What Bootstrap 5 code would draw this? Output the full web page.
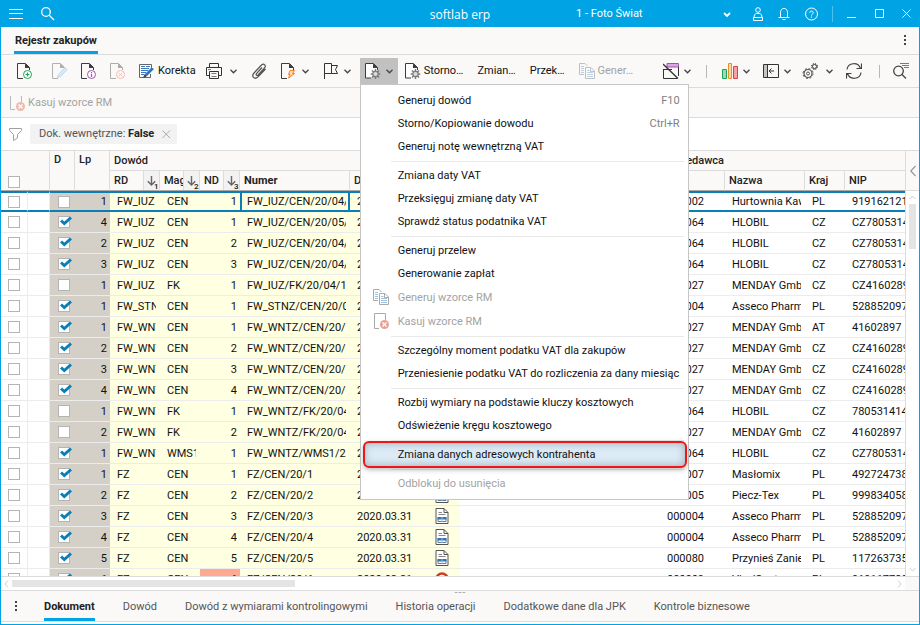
<!DOCTYPE html>
<html lang="pl">
<head>
<meta charset="utf-8">
<meta name="viewport" content="width=device-width, initial-scale=1">
<title>softlab erp</title>
<link href="https://cdn.jsdelivr.net/npm/bootstrap@5.3.0/dist/css/bootstrap.min.css" rel="stylesheet">
<style>
:root { --blue:#00a4e4; --deep:#0a7fb5; --panel:#faf9f8; --line:#dcdcdc; }
body { font:11px/16px Roboto, "Liberation Sans", sans-serif; color:#111; }
svg { display:block; flex:none; }
button { font:inherit; color:inherit; }
.app { border:1px solid var(--blue); border-top:0; }
.titlebar { background:var(--blue); height:27px; }
.icon-btn, .tool { background:none; border:0; padding:0; display:flex; align-items:center; }
.tool { height:26px; white-space:nowrap; }
.brand { font:12px/16px "Open Sans", sans-serif; left:50%; transform:translateX(-50%); top:7px; }
.firm-wrap { margin-right:22px; }
.firm { background:none; color:#fff; border:0; appearance:none; font:inherit; width:155px; outline:0; padding:0; }
.firm-wrap svg { right:0; top:6px; pointer-events:none; }
.title-sep { width:1px; height:16px; background:#4dc0ec; margin:0 14px; }
.doc-tabs { background:var(--panel); height:28px; border-bottom:1px solid var(--line); padding:0 12px 0 13px; }
.doc-tabs a { border-bottom:3px solid var(--blue); font-weight:700; color:#222; padding:0 1px; line-height:20px; }
.bar { background:var(--panel); border-bottom:1px solid var(--line); }
.bar-main { height:33px; padding:0 10px 0 16px; }
.bar-second { height:30px; }
.off { color:#a3a3a3; }
.gap-3px { gap:3px; } .gap-5px { gap:5px; } .gap-8px { gap:8px; } .gap-13 { gap:13px; } .gap-14 { gap:14px; } .gap-15 { gap:15px; } .gap-18 { gap:18px; }
.pull-2 { margin-left:-2px; } .pull-4 { margin-left:-4px; } .pull-5 { margin-left:-5px; } .pull-7 { margin-left:-7px; }
.push-6 { margin-right:6px; }
.bar-sep { width:1px; height:13px; background:#b8b8b8; }
.mid-sep { margin:0 2px; }
.opened { background:#c1c1c1; padding:0 5px; width:38px; }
.bar .menu-list { display:block; position:absolute; top:100%; left:0; z-index:20; width:329px; margin:0; padding:4px 0; border:1px solid #c6c6c6; border-radius:0; background:#fff; font-size:11px; }
.menu-list .dropdown-item { display:flex; align-items:center; height:23px; padding:0 8px 0 12px; line-height:23px; color:#111; }
.menu-list .with-icon { height:24px; }
.menu-list .dropdown-item:disabled { color:#a3a3a3; }
.menu-list .slot { width:25px; flex:none; }
.menu-list kbd { margin-left:auto; background:none; color:#808080; font:inherit; padding:0; }
.menu-list hr { margin:3px 4px 2px 30px; border:0; border-top:1px solid #e9e9e9; opacity:1; }
.menu-list .picked { position:relative; background:#dcebf5; box-shadow:inset 0 0 8px #94a8b8; margin:0 3px; width:calc(100% - 6px); padding-left:9px; }
.menu-list .picked::after { content:""; position:absolute; inset:-2px -2px -2px -1px; border:2px solid #f01616; border-radius:6px; box-shadow:0 2px 5px rgba(0,0,0,.25); }
.filterbar { height:33px; border-bottom:1px solid var(--line); }
.chip { background:#f2f2f2; border-radius:2px; height:20px; color:#555; padding:0 6px 0 9px; }
.chip b { color:#222; }
.grid-scroll { overflow:hidden; }
.ledger { table-layout:fixed; width:100%; border-collapse:separate; border-spacing:0; }
.ledger th { background:var(--panel); font-weight:500; color:#222; padding:0 0 0 4px; border-right:1px solid var(--line); overflow:hidden; white-space:nowrap; vertical-align:middle; }
.ledger .groups th { height:20px; border-bottom:1px solid var(--line); }
.ledger .heads th { height:20px; border-bottom:1px solid #a8a8a8; }
.ledger .groups th[rowspan] { border-bottom-color:#a8a8a8; vertical-align:top; padding-top:1px; }
.ledger .groups th.pick-all { vertical-align:bottom; padding:0 0 2px 7px; }
.ledger .none { border-right:0; }
.head-cell { height:19px; line-height:19px; }
.sorter { width:16px; border-left:1px solid var(--line); background:#f3f2f2; align-self:stretch; }
.ledger td { height:21px; padding:0 4px 0 7px; border-bottom:1px solid #ececec; white-space:nowrap; overflow:hidden; }
.ledger td > span { display:block; overflow:hidden; height:20px; line-height:21px; }
.ledger .edge { border-right:1px solid #ececec; }
.ledger .gray { background:#d4d0c8; }
.ledger .yel { background:#ffffe1; }
.ledger .salmon { background:#ffa992; }
.ledger .num { text-align:right; padding-right:3px; }
.ledger .current td { border-top:2px solid var(--deep); border-bottom:2px solid var(--deep); }
.ledger .current td > span { height:17px; line-height:17px; }
.ledger .current .focus { border-left:2px solid var(--deep); border-right:2px solid var(--deep); padding-left:5px; padding-right:2px; }
.ledger td.tick { padding:0 0 0 7px; }
.ledger td.tick.gray { padding-left:8px; }
.ledger td.flag { padding:4px 0 0 9px; }
.tickbox { appearance:none; display:block; width:12px; height:12px; margin:0; border:1px solid #b4b4b4; background:#fff; }
.tick label { display:block; position:relative; width:12px; height:12px; }
.tick svg { position:absolute; left:2px; top:0; }
.rail { width:14px; }
.rail-top { height:40px; background:var(--panel); border-bottom:1px solid var(--line); border-left:1px solid var(--line); }
.rail-body { border-left:1px solid var(--line); }
.rail-thumb { width:7px; height:45px; background:#e4e4e4; }
.hrail { height:15px; border-top:1px solid var(--line); border-bottom:1px solid var(--line); padding-left:3px; gap:3px; }
.hrail-thumb { height:7px; width:283px; background:#e4e4e4; }
.corner { width:14px; background:var(--panel); }
.pages { background:var(--panel); height:31px; border-bottom:1px solid var(--line); margin-bottom:2px; padding-left:14px; gap:26px; }
.pages a { color:#555; line-height:22px; border-bottom:3px solid transparent; }
.pages .now { color:#222; font-weight:700; border-color:var(--blue); }
.pages .grip { left:50%; top:1px; transform:translateX(-50%); }
.page-links { gap:28px; }
</style>
<script src="https://cdn.jsdelivr.net/npm/bootstrap@5.3.0/dist/js/bootstrap.bundle.min.js"></script>
</head>
<body>
<svg width="0" height="0" class="position-absolute" aria-hidden="true">
  <defs>
    <symbol id="chev" viewBox="0 0 7 5"><path d="M.5.8 3.5 3.8 6.5.8" fill="none" stroke="#444" stroke-width="1.300"/></symbol>
    <symbol id="page" viewBox="0 0 16 16"><path d="M6 15.500H.5V.5H8.500L12.500 4.500V7" fill="none" stroke="#3c3c3c"/><path d="M8 .5V5H13Z" fill="#3c3c3c"/></symbol>
    <symbol id="cog" viewBox="0 0 10 10"><path d="M5 0V10M0 5H10M1.500 1.500 8.500 8.500M8.500 1.500 1.500 8.500" stroke="#7a7a7a" stroke-width="1.500"/><circle cx="5" cy="5" r="2.700" fill="#ddd" stroke="#7a7a7a" stroke-width="1.200"/></symbol>
    <symbol id="pagecog" viewBox="0 0 16 16"><path d="M6 15H.5V.5H8.500L12.500 4.500V7" fill="#fff" stroke="#3c3c3c"/><path d="M8 .5V5H13Z" fill="#3c3c3c"/><use href="#cog" x="5.500" y="6" width="10" height="10"/></symbol>
    <symbol id="copies" viewBox="0 0 16 16"><g fill="none" stroke="#a9a9a9"><path d="M5 11.500H.5V.5H6L8.500 3"/><path d="M6.500 4.500H12L15.500 8V15.500H6.500Z" fill="#fff"/><path d="M11.500 4.500V8.500H15.500"/></g><path d="M2 3.500H5M2 5.500H5M2 7.500H5M2 9.500H5M8 7.500H10.500M8 9.500H14M8 11.500H14M8 13.500H14" stroke="#9fc0dc"/></symbol>
    <symbol id="pagedel" viewBox="0 0 16 16"><path d="M6 15.500H1.500V.5H12.500V7" fill="none" stroke="#a9a9a9"/><circle cx="11.500" cy="11.500" r="4.500" fill="#e9a196"/><path d="M9.500 9.500 13.500 13.500M13.500 9.500 9.500 13.500" stroke="#fff" stroke-width="1.300"/></symbol>
    <symbol id="sort" viewBox="0 0 9 10"><path d="M4.500 0V9M.8 5.200 4.500 9 8.200 5.200" fill="none" stroke="#666" stroke-width="1.400"/></symbol>
    <symbol id="check" viewBox="0 0 12 10"><path d="M1 4.500 4.300 7.500 11 1.500" fill="none" stroke="#0a7fb5" stroke-width="3"/></symbol>
    <symbol id="report" viewBox="0 0 13 16"><path d="M.5.5H8.500L12.500 4.500V15.500H.5Z" fill="#fff" stroke="#555"/><path d="M8.500.5V4.500H12.500" fill="none" stroke="#555"/><path d="M3 4.500H6.500M3 6.500H10" stroke="#888"/><path d="M2.500 9.500H10.500V13.500H2.500Z" fill="#fff" stroke="#5b7f9f"/><path d="M2 9H11V11.500H2Z" fill="#3575b5"/><path d="M6.500 9V14" stroke="#9bb8d2"/></symbol>
    <symbol id="stop" viewBox="0 0 14 14"><circle cx="7" cy="7" r="5.500" fill="#fff" stroke="#d23a22" stroke-width="2.500"/></symbol>
  </defs>
</svg>

<div class="app d-flex flex-column vh-100 overflow-hidden">
  <header class="titlebar d-flex align-items-center text-white position-relative flex-shrink-0">
    <div class="d-flex align-items-center gap-18 ps-2">
      <button class="icon-btn" aria-label="Menu"><svg width="14" height="10" stroke="#fff"><path d="M0 .5H14M0 4.500H14M0 9.500H14"/></svg></button>
      <button class="icon-btn" aria-label="Szukaj"><svg width="14" height="14" fill="none" stroke="#fff" stroke-width="1.300"><circle cx="5" cy="5" r="4.300"/><path d="M8 8 13 13"/></svg></button>
    </div>
    <div class="brand position-absolute">softlab erp</div>
    <div class="ms-auto d-flex align-items-center">
      <div class="firm-wrap position-relative">
        <select class="firm d-block" aria-label="Firma"><option>1 - Foto Świat</option></select>
        <svg class="position-absolute" width="8" height="6"><path d="M1 1 4 4 7 1" fill="none" stroke="#fff" stroke-width="1.800"/></svg>
      </div>
      <div class="d-flex align-items-center gap-15">
        <button class="icon-btn" aria-label="Użytkownik"><svg width="10" height="14" fill="none" stroke="#fff"><circle cx="5" cy="3" r="2.300"/><path d="M1 11C1 8 2 6.500 3.500 6.500H6.500C8 6.500 9 8 9 11M.5 10.500H9.500V13.500H.5Z"/></svg></button>
        <button class="icon-btn" aria-label="Powiadomienia"><svg width="12" height="14" fill="none" stroke="#fff"><path d="M2.500 10.500V5.500C2.500 0 9.500 0 9.500 5.500V10.500M.5 10.500H11.500M4.500 12.500H7.500"/></svg></button>
        <button class="icon-btn" aria-label="Pomoc"><svg width="13" height="14" fill="none" stroke="#fff"><circle cx="6.500" cy="7" r="6"/><path d="M4.700 5.800C4.700 3.500 8.300 3.500 8.300 5.800 8.300 7 6.500 7 6.500 8.500M6.500 9.500V10.700"/></svg></button>
      </div>
      <span class="title-sep"></span>
      <div class="d-flex align-items-center gap-18 pe-2">
        <button class="icon-btn" aria-label="Minimalizuj"><svg width="9" height="10"><path d="M0 8.500H9" stroke="#fff"/></svg></button>
        <button class="icon-btn" aria-label="Maksymalizuj"><svg width="10" height="10"><path d="M1.500.500H9.500V8.500H1.500Z" fill="none" stroke="#fff"/></svg></button>
        <button class="icon-btn" aria-label="Zamknij"><svg width="9" height="9"><path d="M.5.500 8.500 8.500M8.500.500.500 8.500" stroke="#fff"/></svg></button>
      </div>
    </div>
  </header>

  <nav class="doc-tabs d-flex align-items-center justify-content-between flex-shrink-0">
    <a href="#" class="text-decoration-none align-self-end">Rejestr zakupów</a>
    <button class="icon-btn" aria-label="Więcej"><svg width="3" height="11" fill="#444"><path d="M0 0H2V2H0ZM0 4H2V6H0ZM0 8H2V10H0Z"/></svg></button>
  </nav>

  <div class="bar bar-main d-flex align-items-center justify-content-between flex-shrink-0" role="toolbar" aria-label="Narzędzia">
    <div class="d-flex align-items-center gap-14">
      <div class="d-flex gap-13">
        <button class="tool push-6" aria-label="Nowy"><svg width="16" height="16"><use href="#page" width="16" height="16"/><circle cx="10.500" cy="11.500" r="4" fill="#fff" stroke="#21a35a"/><path d="M8.500 11.500H12.500M10.500 9.500V13.500" stroke="#21a35a" stroke-width="1.200"/></svg></button>
        <button class="tool" disabled aria-label="Edytuj"><svg width="16" height="16" opacity=".38"><use href="#page" width="16" height="16"/><path d="M5.500 14.500 6.500 11.500 13 4.500 15 6.500 8.500 13.500Z" fill="#a9d8f2" stroke="#4a9fd0"/></svg></button>
        <button class="tool" aria-label="Informacje"><svg width="16" height="16"><use href="#page" width="16" height="16"/><circle cx="10.500" cy="11.500" r="4" fill="#fff" stroke="#a352ae"/><path d="M10.500 9V10M10.500 10.800V14" stroke="#a352ae" stroke-width="1.200"/></svg></button>
        <button class="tool" disabled aria-label="Usuń"><svg width="16" height="16" opacity=".4"><use href="#page" width="16" height="16"/><circle cx="10.500" cy="11.500" r="4" fill="#fff" stroke="#f0604f"/><path d="M8.800 9.800 12.200 13.200M12.200 9.800 8.800 13.200" stroke="#f0604f"/></svg></button>
        <button class="tool gap-3px"><svg width="16" height="16"><path d="M12.500 5V1.500H.5V14.500H11.500V11" fill="none" stroke="#666"/><path d="M2 3.500H6M7 3.500H11M2 5.500H10M2 7.500H9M2 9.500H7M2 11.500H5" stroke="#3c78bb"/><path d="M4.500 14.500 5.500 11.500 12.500 4.500 15 6 8 13Z" fill="#2f73bd"/><path d="M4 15 5.500 11.500 7.500 13.500Z" fill="#444"/></svg>Korekta</button>
      </div>
      <button class="tool gap-8px pull-4" aria-label="Drukuj"><svg width="16" height="16" fill="none" stroke="#333"><path d="M3.500 5V.5H12.500V5M3.500 12.500H.5V4.500H15.500V12.500H12.500M3.500 8.500H12.500V15.500H3.500Z"/><path d="M5.500 10.500H10.500M5.500 13.500H10.500" stroke="#777"/><path d="M2 6.500H5" stroke="#2b8fd0"/></svg><svg width="7" height="5"><use href="#chev"/></svg></button>
      <button class="tool" aria-label="Załącznik"><svg width="16" height="16" fill="none" stroke="#555" stroke-width="1.200"><path d="M11 4.500 5.500 10.500C4.500 12 6 13 7.200 12L13.500 5C15.500 2.500 13 0 10.500 2L3 10C0 13.500 3.500 17 6.800 14L14.500 6"/></svg></button>
      <button class="tool gap-5px" aria-label="Szybkie akcje"><svg width="16" height="16"><use href="#page" width="16" height="16"/><path d="M9 7.500H13.500L11.500 10.500H13.500L7.500 15L9 11.500H7.500Z" fill="#fbdcb8" stroke="#ec8527"/></svg><svg width="7" height="5"><use href="#chev"/></svg></button>
      <button class="tool gap-5px" aria-label="Flaga"><svg width="16" height="16" fill="none" stroke="#333"><path d="M1.500 16V.500H8.500V10.500H1.500M8.500 2.500H14.500L12.500 6.500 14.500 10.500H8.500"/></svg><svg width="7" height="5"><use href="#chev"/></svg></button>
      <div class="position-relative pull-5">
        <button class="tool opened gap-5px" aria-expanded="true" aria-label="Operacje"><svg width="16" height="16"><use href="#pagecog"/></svg><svg width="7" height="5"><use href="#chev"/></svg></button>
        <div class="menu-list dropdown-menu show">
          <button class="dropdown-item"><span class="slot"></span>Generuj dowód<kbd>F10</kbd></button>
          <button class="dropdown-item"><span class="slot"></span>Storno/Kopiowanie dowodu<kbd>Ctrl+R</kbd></button>
          <button class="dropdown-item"><span class="slot"></span>Generuj notę wewnętrzną VAT</button>
          <hr>
          <button class="dropdown-item"><span class="slot"></span>Zmiana daty VAT</button>
          <button class="dropdown-item"><span class="slot"></span>Przeksięguj zmianę daty VAT</button>
          <button class="dropdown-item"><span class="slot"></span>Sprawdź status podatnika VAT</button>
          <hr>
          <button class="dropdown-item"><span class="slot"></span>Generuj przelew</button>
          <button class="dropdown-item"><span class="slot"></span>Generowanie zapłat</button>
          <button class="dropdown-item with-icon" disabled><span class="slot"><svg width="16" height="16"><use href="#copies"/></svg></span>Generuj wzorce RM</button>
          <button class="dropdown-item with-icon" disabled><span class="slot"><svg width="16" height="16"><use href="#pagedel"/></svg></span>Kasuj wzorce RM</button>
          <hr>
          <button class="dropdown-item"><span class="slot"></span>Szczególny moment podatku VAT dla zakupów</button>
          <button class="dropdown-item"><span class="slot"></span>Przeniesienie podatku VAT do rozliczenia za dany miesiąc</button>
          <hr>
          <button class="dropdown-item"><span class="slot"></span>Rozbij wymiary na podstawie kluczy kosztowych</button>
          <button class="dropdown-item"><span class="slot"></span>Odświeżenie kręgu kosztowego</button>
          <hr>
          <button class="dropdown-item picked"><span class="slot"></span>Zmiana danych adresowych kontrahenta</button>
          <hr>
          <button class="dropdown-item" disabled><span class="slot"></span>Odblokuj do usunięcia</button>
        </div>
      </div>
      <button class="tool gap-3px pull-7"><svg width="16" height="16"><use href="#pagecog"/></svg>Storno…</button>
      <button class="tool">Zmian…</button>
      <button class="tool">Przek…</button>
      <button class="tool gap-3px off" disabled><svg width="16" height="16" opacity=".7"><use href="#copies"/></svg>Gener…</button>
    </div>
    <div class="d-flex align-items-center gap-13">
      <button class="tool gap-5px" aria-label="Kalendarz"><svg width="16" height="16"><path d="M4 .500H15.500V4H4Z" fill="#d9a8de" stroke="#a352ae"/><path d="M0 6.500H9M.5 6V15.500H14M15.500 4V13" fill="none" stroke="#333"/><path d="M0 1 15 15.500" stroke="#333" stroke-width="1.300"/></svg><svg width="7" height="5"><use href="#chev"/></svg></button>
      <span class="bar-sep mid-sep"></span>
      <button class="tool gap-5px" aria-label="Wykres"><svg width="16" height="16"><path d="M.5 6.500H4.500V15.500H.5Z" fill="#9fd6b5" stroke="#21a35a"/><path d="M6.500.500H9.500V15.500H6.500Z" fill="#ffd9a0" stroke="#e8912c"/><path d="M11.500 3.500H15.500V15.500H11.500Z" fill="#f5a3a3" stroke="#e04040"/></svg><svg width="7" height="5"><use href="#chev"/></svg></button>
      <button class="tool gap-5px" aria-label="Panel"><svg width="16" height="16"><path d="M.5 1.500H15.500V14.500H.5Z" fill="none" stroke="#333"/><path d="M1 2H4V14H1Z" fill="#c4c4c4"/><path d="M4.500 2V14M6 8H11M8.500 5.500 6 8 8.500 10.500" fill="none" stroke="#333"/></svg><svg width="7" height="5"><use href="#chev"/></svg></button>
      <button class="tool gap-8px pull-2" aria-label="Ustawienia"><svg width="16" height="16" fill="none" stroke="#555"><circle cx="6" cy="10.500" r="4" stroke-width="1.200"/><circle cx="6" cy="10.500" r="5" stroke-dasharray="2 1.930"/><circle cx="6" cy="10.500" r="1.500"/><circle cx="12.500" cy="3.500" r="2" stroke="#333"/><circle cx="12.500" cy="3.500" r="3" stroke="#333" stroke-dasharray="1.300 1.060"/></svg><svg width="7" height="5"><use href="#chev"/></svg></button>
      <button class="tool" aria-label="Odśwież"><svg width="16" height="16" fill="none" stroke="#444" stroke-width="1.200"><path d="M1 6.500C2-.500 12-1.500 14.500 5.500M15.500.500V5.500H10.500M15 9.500C14 16.500 4 17.500 1.500 10.500M.5 15.500V10.500H5.500"/></svg></button>
      <span class="bar-sep ms-1"></span>
      <button class="tool" aria-label="Szukaj w tabeli"><svg width="16" height="16" fill="none"><circle cx="5.500" cy="8" r="4.800" stroke="#444" stroke-width="1.300"/><path d="M9 11.500 13 15.500" stroke="#444" stroke-width="1.300"/><path d="M7 .500H16M9 2.500H16M11 4.500H16" stroke="#2b8fd0"/></svg></button>
    </div>
  </div>

  <div class="bar bar-second d-flex align-items-center flex-shrink-0 ps-2">
    <button class="tool off gap-3px" disabled><svg width="16" height="16"><path d="M6 14.500H1.500V1M12.500 1V7" fill="none" stroke="#b9b9b9"/><circle cx="11.500" cy="11.500" r="4.500" fill="#edb9b0"/><path d="M9.500 9.500 13.500 13.500M13.500 9.500 9.500 13.500" stroke="#fff" stroke-width="1.300"/></svg>Kasuj wzorce RM</button>
  </div>

  <div class="filterbar d-flex align-items-center flex-shrink-0 ps-2 gap-8px">
    <svg width="13" height="13" fill="none" stroke="#a0a0a0"><path d="M.5.500H12.500V2.500L8.500 6.500V10L4.500 12.500V6.500L.500 2.500Z"/></svg>
    <div class="chip d-flex align-items-center">Dok. wewnętrzne:&nbsp;<b>False</b><button class="icon-btn ms-2" aria-label="Usuń filtr"><svg width="9" height="9"><path d="M.5.500 8 8M8 .500.500 8" stroke="#aaa"/></svg></button></div>
  </div>

  <main class="d-flex flex-grow-1 overflow-hidden">
    <div class="grid-scroll flex-grow-1">
      <table class="ledger">
        <colgroup>
          <col width="27"><col width="22"><col width="25"><col width="35"><col width="50"><col width="40"><col width="40"><col width="110"><col width="70"><col width="40"><col><col width="65"><col width="80"><col width="40"><col width="60">
        </colgroup>
        <thead>
          <tr class="groups">
            <th rowspan="2" class="none pick-all"><input type="checkbox" class="tickbox" aria-label="Zaznacz wszystkie"></th>
            <th rowspan="2"></th><th rowspan="2">D</th><th rowspan="2">Lp</th>
            <th colspan="6">Dowód</th><th></th><th colspan="4" class="none">Sprzedawca</th>
          </tr>
          <tr class="heads">
            <th><div class="head-cell d-flex">RD<span class="sorter ms-auto"><svg width="16" height="19"><use href="#sort" x="3" y="5" width="9" height="10"/><text x="10" y="18" font-size="8" fill="#111">1</text></svg></span></div></th>
            <th><div class="head-cell d-flex"><span class="overflow-hidden">Mag.</span><span class="sorter ms-auto flex-shrink-0"><svg width="16" height="19"><use href="#sort" x="3" y="5" width="9" height="10"/><text x="10" y="18" font-size="8" fill="#111">2</text></svg></span></div></th>
            <th><div class="head-cell d-flex">ND<span class="sorter ms-auto"><svg width="16" height="19"><use href="#sort" x="3" y="5" width="9" height="10"/><text x="10" y="18" font-size="8" fill="#111">3</text></svg></span></div></th>
            <th class="fw-bold">Numer</th><th>Data</th><th></th><th></th><th>Kod</th><th>Nazwa</th><th>Kraj</th><th class="none">NIP</th>
          </tr>
        </thead>
        <tbody id="rows"></tbody>
      </table>
    </div>
    <div class="rail d-flex flex-column flex-shrink-0">
      <button class="icon-btn rail-top justify-content-center" aria-label="Rozwiń panel"><svg width="6" height="12"><path d="M5.500 1 .800 6 5.500 11" fill="none" stroke="#999" stroke-width="1.200"/></svg></button>
      <div class="rail-body flex-grow-1 d-flex flex-column align-items-center">
        <svg width="7" height="5" class="my-1"><path d="M.5 4 3.500 1 6.500 4" fill="none" stroke="#ccc"/></svg>
        <div class="rail-thumb"></div>
        <svg width="7" height="5" class="mt-auto mb-1"><path d="M.5 1 3.500 4 6.500 1" fill="none" stroke="#ccc"/></svg>
      </div>
    </div>
  </main>
  <div class="hrail d-flex align-items-center flex-shrink-0">
    <svg width="5" height="8"><path d="M4 .500 1 4 4 7.500" fill="none" stroke="#ccc"/></svg>
    <div class="hrail-thumb"></div>
    <svg width="5" height="8" class="ms-auto"><path d="M1 .500 4 4 1 7.500" fill="none" stroke="#ccc"/></svg>
    <div class="corner align-self-stretch"></div>
  </div>

  <nav class="pages d-flex align-items-end position-relative flex-shrink-0">
    <svg class="grip position-absolute" width="11" height="1"><path d="M0 .500H3M4 .500H7M8 .500H11" stroke="#b0b0b0"/></svg>
    <button class="icon-btn align-self-center" aria-label="Więcej"><svg width="3" height="11" fill="#444"><path d="M0 0H2V2H0ZM0 4H2V6H0ZM0 8H2V10H0Z"/></svg></button>
    <div class="page-links d-flex">
      <a href="#" class="now text-decoration-none">Dokument</a>
      <a href="#" class="text-decoration-none">Dowód</a>
      <a href="#" class="text-decoration-none">Dowód z wymiarami kontrolingowymi</a>
      <a href="#" class="text-decoration-none">Historia operacji</a>
      <a href="#" class="text-decoration-none">Dodatkowe dane dla JPK</a>
      <a href="#" class="text-decoration-none">Kontrole biznesowe</a>
    </div>
  </nav>
</div>

<script>
// checked, Lp, RD, Mag, ND, Numer, code, name, country, NIP
const data = [
  [0,1,'FW_IUZ','CEN',1,'FW_IUZ/CEN/20/04/1','000002','Hurtownia Kawy','PL','9191621212'],
  [1,4,'FW_IUZ','CEN',1,'FW_IUZ/CEN/20/05/1','000064','HLOBIL','CZ','CZ7805314141'],
  [1,2,'FW_IUZ','CEN',2,'FW_IUZ/CEN/20/04/2','000064','HLOBIL','CZ','CZ7805314141'],
  [1,3,'FW_IUZ','CEN',3,'FW_IUZ/CEN/20/04/3','000064','HLOBIL','CZ','CZ7805314141'],
  [0,1,'FW_IUZ','FK',1,'FW_IUZ/FK/20/04/1','000027','MENDAY GmbH','CZ','CZ41602897'],
  [1,1,'FW_STNZ','CEN',1,'FW_STNZ/CEN/20/04/1','000004','Asseco Pharma','PL','5288520971'],
  [1,1,'FW_WNTZ','CEN',1,'FW_WNTZ/CEN/20/04/1','000027','MENDAY GmbH','AT','41602897'],
  [1,2,'FW_WNTZ','CEN',2,'FW_WNTZ/CEN/20/04/2','000027','MENDAY GmbH','CZ','CZ41602897'],
  [1,3,'FW_WNTZ','CEN',3,'FW_WNTZ/CEN/20/04/3','000027','MENDAY GmbH','CZ','CZ41602897'],
  [1,4,'FW_WNTZ','CEN',4,'FW_WNTZ/CEN/20/04/4','000027','MENDAY GmbH','CZ','CZ41602897'],
  [0,1,'FW_WNTZ','FK',1,'FW_WNTZ/FK/20/04/1','000064','HLOBIL','CZ','7805314141'],
  [0,2,'FW_WNTZ','FK',2,'FW_WNTZ/FK/20/04/2','000027','MENDAY GmbH','CZ','41602897'],
  [1,1,'FW_WNTZ','WMS1',1,'FW_WNTZ/WMS1/20/04','000064','HLOBIL','CZ','CZ7805314141'],
  [1,1,'FZ','CEN',1,'FZ/CEN/20/1','000007','Masłomix','PL','4927247381'],
  [1,2,'FZ','CEN',2,'FZ/CEN/20/2','000005','Piecz-Tex','PL','9998340581'],
  [1,3,'FZ','CEN',3,'FZ/CEN/20/3','000004','Asseco Pharma','PL','5288520971'],
  [1,4,'FZ','CEN',4,'FZ/CEN/20/4','000004','Asseco Pharma','PL','5288520971'],
  [1,5,'FZ','CEN',5,'FZ/CEN/20/5','000080','Przynieś Zanieś','PL','1172637351'],
  [1,6,'FZ','CEN',6,'FZ/CEN/20/6','000009','VivalSanta','PL','9191177281']
];
const cell = (cls, text) => `<td class="${cls}"><span>${text}</span></td>`;
document.getElementById('rows').innerHTML = data.map((r, i) => {
  const last = i === data.length - 1;
  return `<tr${i ? '' : ' class="current"'}>
    <td class="tick edge"><input type="checkbox" class="tickbox" aria-label="Zaznacz wiersz ${i + 1}"></td>
    <td class="edge flag">${last ? '<svg width="8" height="8"><path d="M0 0H8V8H0Z" fill="#f0382c"/></svg>' : ''}</td>
    <td class="tick gray"><label><input type="checkbox" class="tickbox" aria-label="D, wiersz ${i + 1}"${r[0] ? ' checked' : ''}>${r[0] ? '<svg width="12" height="10"><use href="#check"/></svg>' : ''}</label></td>
    ${cell('gray num', r[1])}${cell('yel', r[2])}${cell('yel', r[3])}${cell('num ' + (last ? 'salmon' : 'yel'), r[4])}${cell('yel focus', r[5])}${cell('yel', '2020.03.31')}
    <td class="yel"><svg class="mx-auto" width="14" height="16"><use href="#${last ? 'stop' : 'report'}"/></svg></td>
    <td></td>${cell('', r[6])}${cell('', r[7])}${cell('', r[8])}${cell('pe-0', r[9])}</tr>`;
}).join('');
</script>
</body>
</html>
